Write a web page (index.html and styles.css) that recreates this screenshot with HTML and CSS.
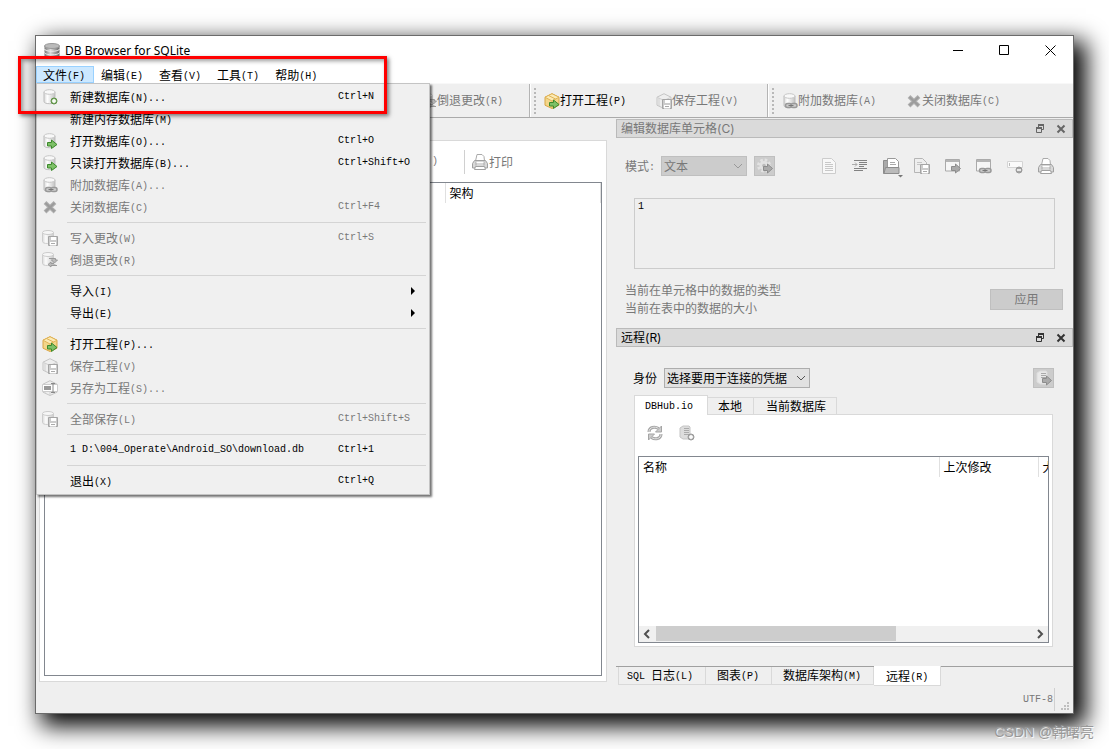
FILE: index.html
```html
<!DOCTYPE html>
<html lang="zh-CN">
<head>
<meta charset="utf-8">
<title>DB Browser for SQLite</title>
<link rel="stylesheet" href="styles.css">
</head>
<body>
<svg class="defs" aria-hidden="true">
  <defs>
    <linearGradient id="metal"><stop offset="0" stop-color="#d6d6d6"/><stop offset=".3" stop-color="#fff"/><stop offset="1" stop-color="#c2c2c2"/></linearGradient>
    <linearGradient id="dark"><stop offset="0" stop-color="#777"/><stop offset=".4" stop-color="#ddd"/><stop offset="1" stop-color="#666"/></linearGradient>
    <symbol id="cyl" viewBox="0 0 16 16"><path d="M2 3v9.500c0 1.300 2 2.200 5.500 2.200s5.500-.9 5.500-2.200v-9.500" fill="url(#metal)" stroke="#bdbdbd"/><ellipse cx="7.500" cy="3" rx="5.500" ry="2.300" fill="#f8f8f8" stroke="#c6c6c6"/></symbol>
    <symbol id="arrow" viewBox="0 0 16 16"><path d="M5.500 9.500h4v-2.500l5.500 4.500-5.500 4v-2.500h-4z" fill="#7dc067" stroke="#3d8a2c"/></symbol>
    <symbol id="garrow" viewBox="0 0 16 16"><path d="M6.500 8.500h4v-2.500l5 4.500-5 4.500v-2.500h-4z" fill="#aaa" stroke="#8c8c8c"/></symbol>
    <symbol id="chain" viewBox="0 0 16 16"><rect x="3.500" y="10.500" width="6" height="4" rx="2" fill="#ccc" stroke="#999" stroke-width="1.500"/><rect x="9" y="10.500" width="6" height="4" rx="2" fill="#ccc" stroke="#999" stroke-width="1.500"/><path d="M6.500 12.500h5" stroke="#777"/></symbol>
    <symbol id="floppy" viewBox="0 0 16 16"><path d="M6.500 6.500h9v9h-9z" fill="#ccc" stroke="#a5a5a5"/><path d="M9 7h5v3h-5zM8 12h6v3.500h-6z" fill="#fff"/><path d="M9 13.500h4" stroke="#aaa"/></symbol>
    <symbol id="db-new" viewBox="0 0 16 16"><use href="#cyl"/><circle cx="12" cy="12" r="3" fill="#8db878" stroke="#5b8e44"/><path d="M12 10v4M10 12h4" stroke="#fff" stroke-width="1.500"/></symbol>
    <symbol id="db-open" viewBox="0 0 16 16"><use href="#cyl"/><use href="#arrow"/></symbol>
    <symbol id="db-attach" viewBox="0 0 16 16"><use href="#cyl"/><use href="#chain"/></symbol>
    <symbol id="cross" viewBox="0 0 16 16"><path d="M3 3.500l10 9.500M13 3.500l-10 9.500" stroke="#b0b0b0" stroke-width="4"/><path d="M3.500 4l9 8.500M12.500 4l-9 8.500" stroke="#9c9c9c" stroke-width="2"/></symbol>
    <symbol id="db-save" viewBox="0 0 16 16"><g opacity=".8"><path d="M.5 2.500v9c0 1.300 2 2 5 2s6-.7 6-2v-9" fill="url(#metal)" stroke="#c4c4c4"/><ellipse cx="6" cy="2.500" rx="5.500" ry="2" fill="#f8f8f8" stroke="#c4c4c4"/></g><use href="#floppy"/></symbol>
    <symbol id="db-revert" viewBox="0 0 16 16"><g opacity=".8"><path d="M.5 2.500v9c0 1.300 2 2 5 2s6-.7 6-2v-9" fill="url(#metal)" stroke="#c4c4c4"/><ellipse cx="6" cy="2.500" rx="5.500" ry="2" fill="#f8f8f8" stroke="#c4c4c4"/></g><path d="M7 6.500h6.500v1.500h2l-3 3-3-3h1M15 13.500h-6v1.500l-3-2.500 3-2.500v1.500h3" fill="#bbb" stroke="#999"/></symbol>
    <symbol id="box-open" viewBox="0 0 16 16"><path d="M8 .7l7 3.500v8l-7 3.300-7-3.300v-8z" fill="#f3d68a" stroke="#d9a544"/><path d="M8 .7l7 3.500-7 3.800-7-3.800z" fill="#fbeab5" stroke="#e0b458"/><path d="M8 8v7M4.500 2.500l7 3.500" stroke="#e0b458"/><use href="#arrow"/></symbol>
    <symbol id="box-gray" viewBox="0 0 16 16"><path d="M8 .7l7 3.500v8l-7 3.300-7-3.300v-8z" fill="#eee" stroke="#c5c5c5"/><path d="M1 4.200l7 3.300 7-3.300M8 7.500v8M3 5v8" fill="none" stroke="#cfcfcf"/></symbol>
    <symbol id="box-save" viewBox="0 0 16 16"><use href="#box-gray"/><use href="#floppy"/></symbol>
    <symbol id="box-as" viewBox="0 0 16 16"><use href="#box-gray"/><path d="M.5 4.500h15v7h-15z" fill="#fff" stroke="#ccc"/><path d="M2 6h7v4h-7z" fill="#999"/><path d="M9 3.500h4M11 3.500v9M9 12.500h4" stroke="#888"/></symbol>
    <symbol id="printer" viewBox="0 0 16 16"><path d="M3.500 7l1.500-6.500h5l2 2 .5 4.500" fill="#fff" stroke="#aaa"/><path d="M2.500 6.500h11l2 3v4.500h-15v-4.500z" fill="#d8d8d8" stroke="#a0a0a0"/><path d="M3.500 12.500l-1 3h11l-1-3z" fill="#fff" stroke="#a0a0a0"/><path d="M4 7.500v4M12 7.500v4" stroke="#aaa"/><path d="M4.500 8.500h7" stroke="#fff"/></symbol>
    <symbol id="page" viewBox="0 0 16 16"><path d="M1.500.500h9l4 4v11h-13z" fill="#f8f8f8" stroke="#ccc"/><path d="M4 4.500h6M4 6.500h8M4 8.500h8M4 10.500h8M4 12.500h8" stroke="#c8c8c8"/></symbol>
    <symbol id="indent" viewBox="0 0 16 16"><path d="M2 2.500h13M7 4.500h8M7 6.500h8M7 8.500h5M2 10.500h13M2 12.500h9" stroke="#828282" stroke-width="1.200"/><path d="M0 6.500h5M3 4.500l2 2-2 2" fill="none" stroke="#aaa"/></symbol>
    <symbol id="import" viewBox="0 0 20 20"><path d="M.5 2.500h5v13h-5z" fill="#aaa" stroke="#8c8c8c"/><path d="M4.500.500h8l3 3v7h-11z" fill="#fff" stroke="#999"/><path d="M7 4.500h5M7 6.500h6" stroke="#aaa"/><path d="M2.500 9.500h13.500v6h-15z" fill="#bababa" stroke="#8c8c8c"/><path d="M15 17h5l-2.500 2.500z" fill="#777"/></symbol>
    <symbol id="export" viewBox="0 0 16 16"><path d="M.5.500h8l4 4v10h-12z" fill="#eee" stroke="#b5b5b5"/><path d="M3 4.500h5M3 6.500h3" stroke="#c5c5c5"/><use href="#floppy"/></symbol>
    <symbol id="win" viewBox="0 0 16 16"><path d="M.5 1.500h14v11.500h-14z" fill="#f6f6f6" stroke="#aaa"/><path d="M1 3h13" stroke="#b5b5b5" stroke-width="2"/></symbol>
    <symbol id="win-go" viewBox="0 0 16 16"><use href="#win"/><use href="#garrow"/></symbol>
    <symbol id="win-link" viewBox="0 0 16 16"><use href="#win"/><use href="#chain"/></symbol>
    <symbol id="null" viewBox="0 0 16 16"><path d="M.5 3.500h15v6h-15z" fill="#fafafa" stroke="#d4d4d4"/><path d="M2.500 5v3" stroke="#bbb"/><circle cx="12" cy="12" r="3" fill="#a4a4a4" stroke="#999"/><path d="M10 12h4" stroke="#fff" stroke-width="1.500"/></symbol>
    <symbol id="gear" viewBox="0 0 16 16"><circle cx="7" cy="7.500" r="5.500" fill="none" stroke="#e2e2e2" stroke-width="3" stroke-dasharray="2.500 1.820"/><circle cx="7" cy="7.500" r="4.500" fill="#e2e2e2"/><circle cx="7" cy="7.500" r="1.800" fill="#bbb"/><use href="#garrow"/></symbol>
    <symbol id="refresh" viewBox="0 0 16 16"><path d="M2 7c0-5 6-6 9.500-3.500M14 9c0 5-6 6-9.500 3.500" fill="none" stroke="#a5a5a5" stroke-width="3"/><path d="M2 7c0-5 6-6 9.500-3.500M14 9c0 5-6 6-9.500 3.500" fill="none" stroke="#e4e4e4"/><path d="M14.500 1v6h-6zM1.500 15v-6h6z" fill="#ccc" stroke="#a5a5a5"/></symbol>
    <symbol id="server" viewBox="0 0 16 16"><path d="M1 3l3-2h6l1 1v11l-1 1h-6l-3-2z" fill="#ddd" stroke="#c5c5c5"/><path d="M5 3.500h5M5 5.500h5M5 7.500h5M5 9.500h5" stroke="#aaa"/></symbol>
    <symbol id="server-add" viewBox="0 0 16 16"><use href="#server"/><circle cx="12" cy="12" r="3" fill="#b5b5b5" stroke="#999"/><path d="M12 10v4M10 12h4" stroke="#fff" stroke-width="1.500"/></symbol>
    <symbol id="server-go" viewBox="0 0 16 16"><path d="M1 3l3-2h6l1 1v11l-1 1h-6l-3-2z" fill="#e8e8e8" stroke="#dcdcdc"/><path d="M5 3.500h5M5 5.500h5M5 7.500h5" stroke="#aaa"/><use href="#garrow"/></symbol>
    <symbol id="app" viewBox="0 0 16 16"><path d="M.5 3v10c0 3 15 3 15 0v-10" fill="url(#dark)"/><ellipse cx="8" cy="3" rx="7.500" ry="2.500" fill="#bbb" stroke="#999"/><path d="M.5 6c0 3 15 3 15 0M.5 9.500c0 3 15 3 15 0" fill="none" stroke="#eee"/></symbol>
    <symbol id="float" viewBox="0 0 10 10"><path d="M3.500 3v-2h5v4.500h-2" fill="none" stroke="currentColor"/><path d="M3 1h6M1 4h6" stroke="currentColor" stroke-width="2"/><path d="M1.500 4v4.500h5v-4.500" fill="none" stroke="currentColor"/></symbol>
    <symbol id="x" viewBox="0 0 10 10"><path d="M1.500 1.500l7 7M8.500 1.500l-7 7" stroke="currentColor" stroke-width="2"/></symbol>
    <symbol id="down" viewBox="0 0 10 10"><path d="M1 3l4 4 4-4" fill="none" stroke="currentColor"/></symbol>
  </defs>
</svg>

<div class="window">
  <header class="titlebar">
    <svg class="icon"><use href="#app"/></svg>
    <h1 class="title">DB Browser for SQLite</h1>
    <button class="sysbtn" aria-label="最小化"><svg viewBox="0 0 11 11"><path d="M0 5.500h10"/></svg></button>
    <button class="sysbtn" aria-label="最大化"><svg viewBox="0 0 11 11"><path d="M.5.500h9v9h-9z"/></svg></button>
    <button class="sysbtn" aria-label="关闭"><svg viewBox="0 0 11 11"><path d="M.5.500l10 10M10.500.500l-10 10"/></svg></button>
  </header>

  <nav class="menubar">
    <div class="menuwrap">
      <button class="menu open">文件<i>(F)</i></button>
      <div class="popup" role="menu">
        <button class="item"><svg class="icon"><use href="#db-new"/></svg><span>新建数据库<i>(N)...</i></span><kbd>Ctrl+N</kbd></button>
        <button class="item"><span class="noicon"></span><span>新建内存数据库<i>(M)</i></span></button>
        <button class="item"><svg class="icon"><use href="#db-open"/></svg><span>打开数据库<i>(O)...</i></span><kbd>Ctrl+O</kbd></button>
        <button class="item"><svg class="icon"><use href="#db-open"/></svg><span>只读打开数据库<i>(B)...</i></span><kbd>Ctrl+Shift+O</kbd></button>
        <button class="item" disabled><svg class="icon"><use href="#db-attach"/></svg><span>附加数据库<i>(A)...</i></span></button>
        <button class="item" disabled><svg class="icon"><use href="#cross"/></svg><span>关闭数据库<i>(C)</i></span><kbd>Ctrl+F4</kbd></button>
        <hr>
        <button class="item" disabled><svg class="icon"><use href="#db-save"/></svg><span>写入更改<i>(W)</i></span><kbd>Ctrl+S</kbd></button>
        <button class="item" disabled><svg class="icon"><use href="#db-revert"/></svg><span>倒退更改<i>(R)</i></span></button>
        <hr>
        <button class="item sub"><span class="noicon"></span><span>导入<i>(I)</i></span></button>
        <button class="item sub"><span class="noicon"></span><span>导出<i>(E)</i></span></button>
        <hr>
        <button class="item"><svg class="icon"><use href="#box-open"/></svg><span>打开工程<i>(P)...</i></span></button>
        <button class="item" disabled><svg class="icon"><use href="#box-save"/></svg><span>保存工程<i>(V)</i></span></button>
        <button class="item" disabled><svg class="icon"><use href="#box-as"/></svg><span>另存为工程<i>(S)...</i></span></button>
        <hr>
        <button class="item" disabled><svg class="icon"><use href="#db-save"/></svg><span>全部保存<i>(L)</i></span><kbd>Ctrl+Shift+S</kbd></button>
        <hr>
        <button class="item"><span class="noicon"></span><kbd>1 D:\004_Operate\Android_SO\download.db</kbd><kbd>Ctrl+1</kbd></button>
        <hr>
        <button class="item"><span class="noicon"></span><span>退出<i>(X)</i></span><kbd>Ctrl+Q</kbd></button>
      </div>
    </div>
    <button class="menu">编辑<i>(E)</i></button>
    <button class="menu">查看<i>(V)</i></button>
    <button class="menu">工具<i>(T)</i></button>
    <button class="menu">帮助<i>(H)</i></button>
  </nav>

  <div class="toolbars">
    <div class="toolbar first">
      <button class="tool" disabled><svg class="icon"><use href="#db-revert"/></svg><span>倒退更改<i>(R)</i></span></button>
    </div>
    <div class="toolbar second">
      <span class="grip"></span>
      <button class="tool"><svg class="icon"><use href="#box-open"/></svg><span>打开工程<i>(P)</i></span></button>
      <button class="tool" disabled><svg class="icon"><use href="#box-save"/></svg><span>保存工程<i>(V)</i></span></button>
    </div>
    <div class="toolbar third">
      <span class="grip"></span>
      <button class="tool" disabled><svg class="icon"><use href="#db-attach"/></svg><span>附加数据库<i>(A)</i></span></button>
      <button class="tool" disabled><svg class="icon"><use href="#cross"/></svg><span>关闭数据库<i>(C)</i></span></button>
    </div>
  </div>

  <main class="main">
    <section class="structure">
      <div class="structbar">
        <button class="tool" disabled><i>)</i></button>
        <span class="vline"></span>
        <button class="tool" disabled><svg class="icon"><use href="#printer"/></svg><span>打印</span></button>
      </div>
      <div class="grid">
        <table class="cols schema"><thead><tr><th class="wide"></th><th>架构</th></tr></thead></table>
      </div>
    </section>

    <div class="docks">
      <section class="dock">
        <header class="docktitle off"><h2>编辑数据库单元格(C)</h2><button aria-label="浮动"><svg><use href="#float"/></svg></button><button aria-label="关闭"><svg><use href="#x"/></svg></button></header>
        <div class="moderow">
          <label for="mode">模式<i>:</i></label>
          <span class="combo mode"><select id="mode" disabled><option>文本</option></select><svg><use href="#down"/></svg></span>
          <button class="square" disabled aria-label="自动切换"><svg class="icon"><use href="#gear"/></svg></button>
          <div class="icons">
            <button disabled aria-label="文档"><svg class="icon"><use href="#page"/></svg></button>
            <button disabled aria-label="缩进"><svg class="icon"><use href="#indent"/></svg></button>
            <button disabled aria-label="导入"><svg class="icon big"><use href="#import"/></svg></button>
            <button disabled aria-label="导出"><svg class="icon"><use href="#export"/></svg></button>
            <button disabled aria-label="打开"><svg class="icon"><use href="#win-go"/></svg></button>
            <button disabled aria-label="链接"><svg class="icon"><use href="#win-link"/></svg></button>
            <button disabled aria-label="设为空"><svg class="icon"><use href="#null"/></svg></button>
            <button disabled aria-label="打印"><svg class="icon"><use href="#printer"/></svg></button>
          </div>
        </div>
        <div class="cellrow"><textarea class="cell" readonly aria-label="单元格">1</textarea></div>
        <div class="inforow">
          <p>当前在单元格中的数据的类型<br>当前在表中的数据的大小</p>
          <button class="apply" disabled>应用</button>
        </div>
      </section>

      <section class="dock remote">
        <header class="docktitle"><h2>远程(R)</h2><button aria-label="浮动"><svg><use href="#float"/></svg></button><button aria-label="关闭"><svg><use href="#x"/></svg></button></header>
        <div class="idrow">
          <label for="ident">身份</label>
          <span class="combo ident"><select id="ident"><option>选择要用于连接的凭据</option></select><svg><use href="#down"/></svg></span>
          <button class="square end" disabled aria-label="推送"><svg class="icon"><use href="#server-go"/></svg></button>
        </div>
        <div class="tabs">
          <button class="tab active"><i>DBHub.io</i></button><button class="tab">本地</button><button class="tab">当前数据库</button>
        </div>
        <div class="tabpane">
          <div class="paneicons">
            <button disabled aria-label="刷新"><svg class="icon"><use href="#refresh"/></svg></button>
            <button disabled aria-label="克隆"><svg class="icon"><use href="#server-add"/></svg></button>
          </div>
          <div class="grid">
            <table class="cols files"><thead><tr><th class="wide">名称</th><th>上次修改</th><th class="cut">大小</th></tr></thead></table>
            <div class="scroll">
              <svg viewBox="0 0 17 16"><path d="M10 4l-4 4 4 4"/></svg>
              <div class="track"><div class="thumb"></div></div>
              <svg viewBox="0 0 17 16"><path d="M7 4l4 4-4 4"/></svg>
            </div>
          </div>
        </div>
      </section>

      <div class="docktabs">
        <button class="dtab"><i>SQL </i>日志<i>(L)</i></button><button class="dtab">图表<i>(P)</i></button><button class="dtab">数据库架构<i>(M)</i></button><button class="dtab active">远程<i>(R)</i></button>
      </div>
    </div>
  </main>

  <footer class="status">
    <span class="enc">UTF-8</span>
    <svg class="sizegrip" viewBox="0 0 9 9"><path d="M6 0h2v2h-2zM3 3h2v2h-2zM6 3h2v2h-2zM0 6h2v2h-2zM3 6h2v2h-2zM6 6h2v2h-2z"/></svg>
  </footer>
  <div class="highlight"></div>
</div>
<div class="watermark">CSDN @韩曙亮</div>
</body>
</html>
```
FILE: styles.css
```css
* { box-sizing: border-box; }

body {
  margin: 0;
  min-height: 100vh;
  padding: 35px;
  display: flex;
  position: relative;
  overflow: hidden;
  background: #fff;
  color: #000;
  font: 12px/16px "Noto Sans CJK SC", sans-serif;
}

button, select, textarea { font: inherit; color: inherit; margin: 0; }
button { background: none; border: 0; padding: 0; white-space: nowrap; }
button:disabled, .off { color: #787878; }
i, kbd { font: 10px/14px "Liberation Mono", monospace; white-space: pre; }
i { vertical-align: 1px; }
h1, h2, p { margin: 0; font-size: 12px; font-weight: 400; }

.defs { position: absolute; width: 0; height: 0; }
.icon { width: 16px; height: 16px; flex: none; display: block; }
.icon.big { width: 20px; height: 20px; flex: none; margin-top: 4px; }

.window {
  flex: 1;
  min-width: 0;
  position: relative;
  display: flex;
  flex-direction: column;
  border: 1px solid #6b6b6b;
  background: #efefef;
  box-shadow: 9px 9px 22px 3px #000;
}

.titlebar { display: flex; align-items: center; height: 29px; padding-left: 8px; background: #fff; }
.title { flex: 1; padding-left: 5px; font-family: "Noto Sans", sans-serif; }
.sysbtn { width: 46px; height: 28px; display: flex; align-items: center; justify-content: center; }
.sysbtn svg { width: 11px; height: 11px; fill: none; stroke: #000; }

.menubar { display: flex; height: 18px; padding-top: 1px; background: #fff; }
.menuwrap { position: relative; }
.menu { display: block; height: 17px; padding: 0 8px 0 6px; border: 1px solid transparent; line-height: 15px; }
.menu.open { background: #cce8ff; border-color: #99d1ff; }

.popup {
  position: absolute;
  z-index: 2;
  top: 100%;
  left: 0;
  width: 394px;
  padding: 2px 0;
  background: #f0f0f0;
  border: 1px solid #c4c4c4;
  box-shadow: 2px 2px 2px rgba(0, 0, 0, .55);
}
.item {
  display: grid;
  grid-template-columns: 28px 268px 1fr;
  align-items: center;
  width: 100%;
  height: 22px;
  padding-left: 5px;
  text-align: left;
}
.popup hr { height: 1px; margin: 4px 3px 4px 30px; border: 0; background: #d4d4d4; }
.sub::after { content: ""; justify-self: end; margin-right: 14px; border: 4px solid transparent; border-left-color: #000; border-right: 0; }

.toolbars { display: flex; height: 35px; border-top: 1px solid #f8f8f8; border-bottom: 1px solid #aaa; }
.toolbar { display: flex; align-items: center; border-right: 1px solid #b4b4b4; border-left: 1px solid #fff; }
.toolbar.first { width: 494px; justify-content: flex-end; padding-right: 26px; }
.toolbar.second { width: 238px; }
.toolbar.third { flex: 1; border-right: 0; }
.tool { display: flex; align-items: center; gap: 1px; }
.toolbar .tool { gap: 0; }
.toolbar .tool + .tool { margin-left: 30px; }
.grip { width: 2px; height: 26px; margin: 0 8px 0 3px; background: repeating-linear-gradient(#b8b8b8 0 2px, transparent 2px 4px); }

.main { flex: 1; display: grid; grid-template-columns: minmax(0, 1fr) 457px; min-height: 0; }

.structure {
  display: flex;
  flex-direction: column;
  margin: 22px 9px 4px 3px;
  padding: 0 4px 5px;
  border: 1px solid #d9d9d9;
  background: #fff;
}
.structbar { display: flex; align-items: center; height: 41px; padding-left: 388px; }
.structbar .tool { flex: none; }
.vline { width: 1px; height: 24px; margin: 0 7px 0 26px; background: #d0d0d0; }

.grid { flex: 1; display: flex; flex-direction: column; border: 1px solid #82878f; background: #fff; overflow: hidden; }
.cols { width: 100%; table-layout: fixed; border-collapse: collapse; }
.cols th { height: 20px; padding: 0 4px; border-right: 1px solid #e0e0e0; text-align: left; font-weight: 400; white-space: nowrap; overflow: hidden; }
.schema .wide { width: 400px; }
.files .wide { width: 300px; }
.files .cut { width: 10px; border-right: 0; padding-right: 0; }

.docks { display: flex; flex-direction: column; padding-top: 1px; min-width: 0; }
.docktitle { display: flex; align-items: center; gap: 11px; height: 19px; padding: 0 6px 0 4px; border: 1px solid #bababa; background: #dadada; }
.docktitle h2 { flex: 1; font-family: Inter, "Noto Sans CJK SC", sans-serif; }
.docktitle svg { display: block; width: 10px; height: 10px; color: #333; }
.docktitle.off svg { color: #666; }

.moderow { display: flex; align-items: center; height: 22px; margin: 17px 19px 0 9px; color: #787878; }
.moderow label { width: 36px; }
.combo { position: relative; display: block; }
.combo select { display: block; width: 100%; height: 20px; padding: 0 2px; appearance: none; border: 1px solid #adadad; border-radius: 0; background: #e1e1e1; line-height: 16px; }
.combo select:disabled { border-color: #bfbfbf; background: #ccc; color: #787878; opacity: 1; }
.combo svg { position: absolute; right: 4px; top: 5px; width: 10px; height: 10px; color: #555; pointer-events: none; }
.combo.mode svg { color: #999; }
.mode { width: 86px; }
.ident { width: 146px; }
.square { width: 21px; height: 20px; display: flex; align-items: center; justify-content: center; border: 1px solid #bfbfbf; background: #ccc; }
.moderow .square { margin-left: 7px; }
.icons { flex: 1; display: flex; justify-content: flex-end; gap: 15px; }
.icons button { display: flex; width: 16px; height: 16px; align-items: center; }

.cellrow { display: flex; margin: 21px 18px 0; }
.cell { flex: 1; height: 71px; padding: 0 3px; border: 1px solid #ccc; border-radius: 0; outline: 0; resize: none; background: #efefef; font: 10px/16px "Liberation Mono", monospace; }
.inforow { display: flex; justify-content: space-between; align-items: center; margin: 12px 10px 11px 9px; color: #787878; }
.inforow p { line-height: 18px; }
.apply { width: 73px; height: 21px; border: 1px solid #bfbfbf; background: #ccc; }

.remote { flex: 1; display: flex; flex-direction: column; }
.idrow { display: flex; align-items: center; margin: 21px 19px 7px 17px; }
.idrow label { width: 31px; }
.end { margin-left: auto; }
.tabs { display: flex; align-items: flex-end; padding-left: 18px; height: 19px; }
.tab { height: 17px; padding: 0 11px 0 10px; border: 1px solid #d9d9d9; border-width: 1px 1px 0 0; line-height: 16px; }
.tab:last-child { padding: 0 10px 0 12px; }
.tab.active { position: relative; z-index: 1; height: 20px; margin-bottom: -1px; padding: 0 14px 0 10px; border-left-width: 1px; background: #fff; }
.tabpane { flex: 1; display: flex; flex-direction: column; margin: 0 20px 19px 18px; padding: 0 3px 3px; border: 1px solid #d9d9d9; background: #fff; }
.paneicons { display: flex; gap: 16px; height: 41px; padding: 10px 9px 0; }
.paneicons button { height: 16px; }
.scroll { display: flex; height: 16px; margin-top: auto; background: #f0f0f0; }
.scroll svg { width: 17px; height: 16px; flex: none; fill: none; stroke: #505050; stroke-width: 2; }
.track { flex: 1; }
.thumb { width: 64%; height: 15px; background: #cdcdcd; }

.docktabs { display: flex; align-items: flex-start; height: 20px; padding-left: 2px; border-top: 1px solid #a0a0a0; }
.dtab { height: 18px; padding: 0 12px 0 11px; border: 1px solid #d9d9d9; border-width: 0 1px 1px 0; line-height: 16px; }
.dtab:first-child { border-left-width: 1px; padding: 0 12px 0 8px; }
.dtab.active { height: 20px; margin-top: -1px; padding: 1px 12px 0; background: #fff; }

.status { display: flex; justify-content: flex-end; align-items: flex-end; height: 27px; padding: 0 3px 2px; }
.enc { height: 23px; padding: 4px 1px 0 0; border-right: 1px solid #d0d0d0; color: #787878; font: 10px/16px "Liberation Mono", monospace; }
.sizegrip { width: 9px; height: 9px; margin-left: 6px; fill: #bfbfbf; }

.highlight {
  position: absolute;
  z-index: 3;
  top: 20px;
  left: -18px;
  width: 369px;
  height: 58px;
  border: 3px solid #f00;
  box-shadow: 2px 2px 4px rgba(0, 0, 0, .5), inset 2px 2px 4px rgba(0, 0, 0, .4);
  pointer-events: none;
}
.watermark { position: absolute; right: 15px; bottom: 6px; color: #999; font: 14px/22px "Liberation Sans", "Noto Sans CJK SC", sans-serif; text-shadow: 1px 1px 1px #fff; }
```
